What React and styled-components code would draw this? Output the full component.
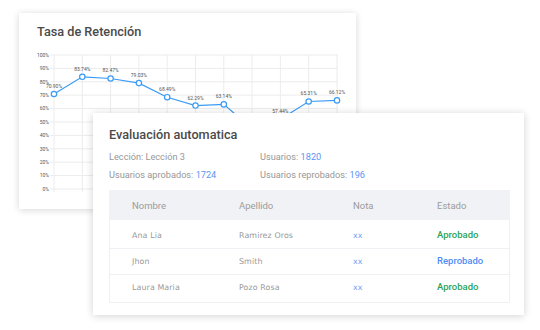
import React from 'react';
import styled, { createGlobalStyle } from 'styled-components';

const GlobalStyle = createGlobalStyle`
  html, body {
    margin: 0;
    padding: 0;
    background: #ffffff;
    font-family: Roboto, "Liberation Sans", Arial, sans-serif;
  }
`;

// chart data (the 8th point sits behind the second card)
const points = [
  { v: 70.9, label: '70.90%' },
  { v: 83.74, label: '83.74%' },
  { v: 82.47, label: '82.47%' },
  { v: 79.03, label: '79.03%' },
  { v: 68.49, label: '68.49%' },
  { v: 62.29, label: '62.29%' },
  { v: 63.14, label: '63.14%' },
  { v: 45, label: '' },
  { v: 52, label: '57.44%' },
  { v: 65.31, label: '65.31%' },
  { v: 66.12, label: '66.12%' },
];

const rows = [
  { nombre: 'Ana Lia', apellido: 'Ramirez Oros', nota: 'xx', estado: 'Aprobado' },
  { nombre: 'Jhon', apellido: 'Smith', nota: 'xx', estado: 'Reprobado' },
  { nombre: 'Laura Maria', apellido: 'Pozo Rosa', nota: 'xx', estado: 'Aprobado' },
];

const Stage = styled.div`
  position: relative;
  width: 540px;
  height: 330px;
  padding: 13px 0 0 19px;
  box-sizing: border-box;
`;

const ChartCard = styled.section`
  width: 337px;
  height: 196px;
  background: #fff;
  box-shadow: 0 1px 7px rgba(0, 0, 0, 0.16);
  padding: 11px 0 0 18px;
  box-sizing: border-box;
`;

const Title = styled.h2`
  margin: 0;
  font-size: 12.7px;
  line-height: 16px;
  font-weight: 500;
  color: #4a4a4a;
`;

const ChartSvg = styled.svg`
  display: block;
  margin: 9px 0 0 -18px;
`;

const EvalCard = styled.section`
  position: absolute;
  left: 93px;
  top: 113px;
  width: 431px;
  height: 202px;
  background: #fff;
  box-shadow: 0 1px 8px rgba(0, 0, 0, 0.18);
  padding: 14px 14px 0 16px;
  box-sizing: border-box;
`;

const InfoGrid = styled.div`
  display: grid;
  grid-template-columns: 151px 1fr;
  row-gap: 6px;
  margin-top: 8px;
  font-size: 9.2px;
  line-height: 12px;
  color: #979797;
`;

const Num = styled.span`
  color: #5b94f6;
`;

const Table = styled.div`
  margin-top: 9px;
  width: 401px;
  border: 1px solid #eef0f3;
  border-top: none;
  box-sizing: border-box;
`;

const Row = styled.div`
  display: grid;
  grid-template-columns: 107px 114px 84px 1fr;
  align-items: center;
  padding-left: 22px;
  height: ${p => p.$h || 25}px;
  border-top: ${p => (p.$line ? '1px solid #eef0f3' : 'none')};
`;

const Head = styled(Row)`
  background: #f1f2f5;
  height: 30px;
  margin: 0 -1px;
  padding-left: 23px;
  font-size: 9.5px;
  color: #9b9b9b;
`;

const Body = styled.div`
  padding: 3px 0 2px;
`;

const Cell = styled.span`
  font-family: "DejaVu Sans", Verdana, sans-serif;
  font-size: 7.9px;
  color: ${p => p.$color || '#999999'};
  letter-spacing: 0.1px;
`;

const Status = styled.span`
  font-size: 9.5px;
  font-weight: 500;
  margin-top: -2px;
  color: ${p => (p.$ok ? '#2ba35b' : '#4d8ef5')};
`;

function Chart() {
  // page coords offset: svg starts at x=19, y=49
  const x0 = 35;
  const step = 28.3;
  const yTop = 6;
  const yBot = 140;
  const yOf = v => yBot - (v / 100) * (yBot - yTop);
  const xs = points.map((_, i) => x0 + i * step);
  const line = points.map((p, i) => `${xs[i]},${yOf(p.v)}`).join(' ');
  const ticks = [100, 90, 80, 70, 60, 50, 40, 30, 20, 10, 0];

  return (
    <ChartSvg width="337" height="150" viewBox="0 0 337 150">
      {ticks.map(t => (
        <g key={t}>
          <line x1={x0 - 4} x2={xs[10] + 1} y1={yOf(t)} y2={yOf(t)} stroke="#ececec" strokeWidth="1" />
          <text x={x0 - 5} y={yOf(t) + 1.8} fontSize="5" textAnchor="end" fill="#555" fontFamily="Roboto, sans-serif">
            {t}%
          </text>
        </g>
      ))}
      {xs.map((x, i) => (
        <line key={i} x1={x} x2={x} y1={yTop} y2={yBot + 3} stroke="#ececec" strokeWidth="1" />
      ))}
      <polyline points={line} fill="none" stroke="#3a9bf6" strokeWidth="1.2" />
      {points.map((p, i) => (
        <g key={i}>
          <circle cx={xs[i]} cy={yOf(p.v)} r="2.7" fill="#fff" stroke="#3a9bf6" strokeWidth="1.2" />
          {p.label && (
            <text
              x={xs[i]}
              y={yOf(p.v) - (i === 0 ? 5.5 : 6)}
              fontSize="5"
              textAnchor="middle"
              fill="#555"
              fontFamily="Roboto, sans-serif"
            >
              {p.label}
            </text>
          )}
        </g>
      ))}
    </ChartSvg>
  );
}

export default function App() {
  return (
    <Stage>
      <GlobalStyle />
      <ChartCard>
        <Title>Tasa de Retención</Title>
        <Chart />
      </ChartCard>
      <EvalCard>
        <Title>Evaluación automatica</Title>
        <InfoGrid>
          <span>Lección: Lección 3</span>
          <span>Usuarios: <Num>1820</Num></span>
          <span>Usuarios aprobados: <Num>1724</Num></span>
          <span>Usuarios reprobados: <Num>196</Num></span>
        </InfoGrid>
        <Table>
          <Head>
            <span>Nombre</span>
            <span>Apellido</span>
            <span>Nota</span>
            <span>Estado</span>
          </Head>
          <Body>
            {rows.map((r, i) => (
              <Row key={r.nombre} $line={i > 0}>
                <Cell>{r.nombre}</Cell>
                <Cell>{r.apellido}</Cell>
                <Cell $color="#6b9df6">{r.nota}</Cell>
                <Status $ok={r.estado === 'Aprobado'}>{r.estado}</Status>
              </Row>
            ))}
          </Body>
        </Table>
      </EvalCard>
    </Stage>
  );
}
